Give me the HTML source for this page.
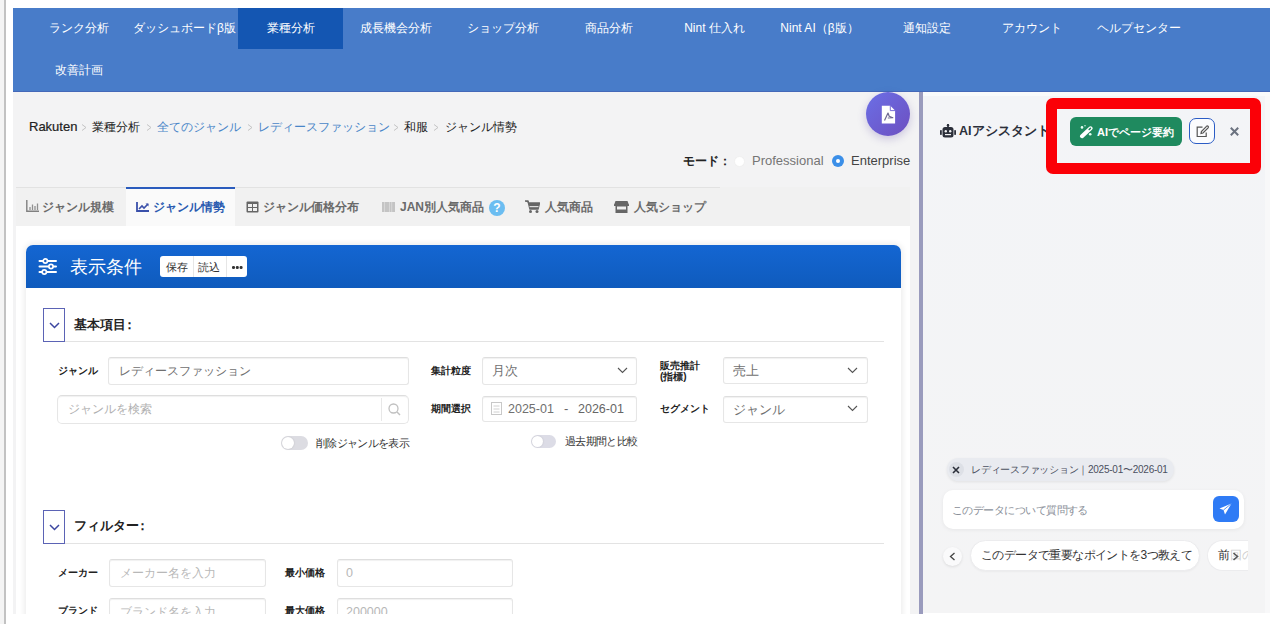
<!DOCTYPE html>
<html><head><meta charset="utf-8">
<style>
*{box-sizing:border-box;margin:0;padding:0}
html,body{width:1280px;height:624px;overflow:hidden;background:#fff;font-family:"Liberation Sans",sans-serif;color:#222}
.abs{position:absolute}
#edge{left:4px;top:0;width:2px;height:624px;background:#c2c2c2}
body::before{content:"";position:absolute;left:0;top:0;width:4px;height:624px;background:#f4f4f4}
#nav{left:13px;top:8px;width:1257px;height:84px;background:#487cc9;border-bottom:1px solid #4468b8}
.ni{position:absolute;height:42px;line-height:40px;font-size:12px;color:#fff;text-align:center;white-space:nowrap}
#main{left:13px;top:92px;width:906px;height:522px;background:#f3f3f4;overflow:hidden}
#div{left:919px;top:92px;width:4px;height:522px;background:#9a9bbd}
#right{left:923px;top:92px;width:347px;height:521px;background:linear-gradient(180deg,#f3f4f7,#f4f4f5);overflow:hidden}
.crumb{position:absolute;top:119px;font-size:12px;line-height:16px;white-space:nowrap}
.sep{color:#c0c0c0;font-size:10px}
.tab{position:absolute;top:187px;height:39px;line-height:40px;font-size:12px;font-weight:bold;color:#6a6a6a;white-space:nowrap}
.lbl{position:absolute;font-size:10px;font-weight:bold;color:#222;white-space:nowrap}
.inp{position:absolute;background:#fff;border:1px solid #e6e6e6;border-top-color:#dedede;box-shadow:inset 0 1px 1px rgba(0,0,0,.06);border-radius:3px;font-size:13px;color:#707070;white-space:nowrap}
.chev{position:absolute;width:8px;height:8px;border-right:1.5px solid #555;border-bottom:1.5px solid #555;transform:rotate(45deg)}
</style></head><body>
<div id="edge" class="abs"></div>
<div id="nav" class="abs">
  <div class="abs" style="left:225px;top:0;width:105px;height:41px;background:#1456b2"></div>
  <div class="ni" style="left:13px;top:0;width:105px">ランク分析</div>
  <div class="ni" style="left:119px;top:0;width:105px">ダッシュボードβ版</div>
  <div class="ni" style="left:225px;top:0;width:105px">業種分析</div>
  <div class="ni" style="left:330px;top:0;width:105px">成長機会分析</div>
  <div class="ni" style="left:437px;top:0;width:105px">ショップ分析</div>
  <div class="ni" style="left:543px;top:0;width:105px">商品分析</div>
  <div class="ni" style="left:649px;top:0;width:105px">Nint 仕入れ</div>
  <div class="ni" style="left:754px;top:0;width:105px">Nint AI（β版）</div>
  <div class="ni" style="left:861px;top:0;width:105px">通知設定</div>
  <div class="ni" style="left:966px;top:0;width:105px">アカウント</div>
  <div class="ni" style="left:1073px;top:0;width:105px">ヘルプセンター</div>
  <div class="ni" style="left:13px;top:42px;width:105px">改善計画</div>
</div>
<div id="main" class="abs"></div>
<!-- breadcrumb -->
<div class="crumb" style="left:29px;font-size:13px;-webkit-text-stroke:.2px #222">Rakuten</div>
<svg class="abs" style="left:81px;top:123px" width="6" height="9"><path d="M1 1.5L5 4.5 1 7.5" fill="none" stroke="#c4c4c4" stroke-width="1"/></svg>
<div class="crumb" style="left:92px">業種分析</div>
<svg class="abs" style="left:146px;top:123px" width="6" height="9"><path d="M1 1.5L5 4.5 1 7.5" fill="none" stroke="#c4c4c4" stroke-width="1"/></svg>
<div class="crumb" style="left:157px;color:#4a86c8">全てのジャンル</div>
<svg class="abs" style="left:247px;top:123px" width="6" height="9"><path d="M1 1.5L5 4.5 1 7.5" fill="none" stroke="#c4c4c4" stroke-width="1"/></svg>
<div class="crumb" style="left:258px;color:#4a86c8">レディースファッション</div>
<svg class="abs" style="left:393px;top:123px" width="6" height="9"><path d="M1 1.5L5 4.5 1 7.5" fill="none" stroke="#c4c4c4" stroke-width="1"/></svg>
<div class="crumb" style="left:404px">和服</div>
<svg class="abs" style="left:433px;top:123px" width="6" height="9"><path d="M1 1.5L5 4.5 1 7.5" fill="none" stroke="#c4c4c4" stroke-width="1"/></svg>
<div class="crumb" style="left:445px">ジャンル情勢</div>
<!-- pdf -->
<div class="abs" style="left:866px;top:92px;width:44px;height:44px;border-radius:50%;background:linear-gradient(135deg,#6b6fe6,#6d4fc0);box-shadow:0 3px 8px rgba(80,60,160,.25)"></div>
<svg class="abs" style="left:881px;top:105px" width="16" height="20" viewBox="0 0 16 20"><path d="M.8 .8h8.5l4.8 4.8v12.8H.8z" fill="#fff"/><path d="M9.3 .8v4.8h4.8" fill="none" stroke="#6a5fd0" stroke-width=".9"/><path d="M3.5 15.5L7 8l1.2 3.2 3.6 1.5-5 .3" fill="none" stroke="#6e6890" stroke-width="1.2" stroke-linejoin="round"/></svg>
<!-- mode -->
<div class="abs" style="left:683px;top:153px;font-size:12px;font-weight:bold;line-height:16px;white-space:nowrap">モード：</div>
<div class="abs" style="left:734px;top:156px;width:11px;height:11px;border-radius:50%;background:#fff;border:1px solid #f0f0f0"></div>
<div class="abs" style="left:752px;top:153px;font-size:13px;color:#757575;line-height:16px;white-space:nowrap">Professional</div>
<div class="abs" style="left:832px;top:155px;width:12px;height:12px;border-radius:50%;background:#3b8fe8"><div class="abs" style="left:4px;top:4px;width:4px;height:4px;border-radius:50%;background:#fff"></div></div>
<div class="abs" style="left:851px;top:153px;font-size:13px;color:#444;line-height:16px;white-space:nowrap">Enterprise</div>
<!-- tabs -->
<div class="abs" style="left:16px;top:187px;width:894px;height:39px;background:#f1f1f1"></div><div class="abs" style="left:16px;top:187px;width:704px;height:1px;background:#e2e2e2"></div>
<div class="abs" style="left:126px;top:187px;width:109px;height:40px;background:#fafafa;border-top:2.5px solid #2a5bbd"></div>
<svg class="abs" style="left:26px;top:200px" width="13" height="12" viewBox="0 0 13 12"><path d="M.8 0v11.2H13" fill="none" stroke="#808080" stroke-width="1.4"/><path d="M4 10V7M6.5 10V4.5M9 10V6M11.5 10V3.5" stroke="#909090" stroke-width="1.3"/></svg>
<svg class="abs" style="left:136px;top:202px" width="13" height="10" viewBox="0 0 13 10"><path d="M1 0v9h12" fill="none" stroke="#3a50aa" stroke-width="1.8"/><path d="M3 7l3-3 2 2 4-4" fill="none" stroke="#3a50aa" stroke-width="1.6"/><path d="M9.5 1.5h3v3z" fill="#3a50aa"/></svg>
<svg class="abs" style="left:246px;top:201px" width="13" height="12" viewBox="0 0 13 12"><rect x=".5" y=".5" width="12" height="11" rx="1" fill="#666"/><rect x="2" y="3" width="4" height="3" fill="#f0f0f0"/><rect x="7" y="3" width="4" height="3" fill="#f0f0f0"/><rect x="2" y="7" width="4" height="3" fill="#f0f0f0"/><rect x="7" y="7" width="4" height="3" fill="#f0f0f0"/></svg>
<svg class="abs" style="left:382px;top:202px" width="13" height="10" viewBox="0 0 13 10"><rect x="0" y="0" width="13" height="10" fill="#c4c4c4"/><rect x="2.2" y="0" width=".6" height="10" fill="#e4e4e4"/><rect x="7" y="0" width=".6" height="10" fill="#e4e4e4"/><rect x="9.5" y="0" width=".6" height="10" fill="#e4e4e4"/></svg>
<svg class="abs" style="left:525px;top:200px" width="15" height="13" viewBox="0 0 15 13"><path d="M0 1h3l2 8h8l1.5-6H4" fill="#666" stroke="#666" stroke-width="1.5" stroke-linejoin="round"/><rect x="4.5" y="6" width="9" height="1.2" fill="#ddd"/><circle cx="5.5" cy="11.5" r="1.5" fill="#666"/><circle cx="12" cy="11.5" r="1.5" fill="#666"/></svg>
<svg class="abs" style="left:614px;top:201px" width="15" height="12" viewBox="0 0 15 12"><path d="M1.5 0h12l1.5 4H0z" fill="#666"/><rect x="0" y="3.5" width="15" height="1.5" fill="#666"/><rect x="1.5" y="5" width="12" height="7" fill="#666"/><rect x="3" y="5.5" width="9" height="3" fill="#f0f0f0"/></svg>
<div class="tab" style="left:42px">ジャンル規模</div>
<div class="tab" style="left:153px;color:#2a5bb0">ジャンル情勢</div>
<div class="tab" style="left:263px">ジャンル価格分布</div>
<div class="tab" style="left:400px">JAN別人気商品</div>
<div class="abs" style="left:489px;top:200px;width:16px;height:16px;border-radius:50%;background:#6bbdf1;color:#fff;font-size:12px;font-weight:bold;text-align:center;line-height:16px">?</div>
<div class="tab" style="left:545px">人気商品</div>
<div class="tab" style="left:634px">人気ショップ</div>
<!-- content -->
<div class="abs" style="left:16px;top:226px;width:894px;height:388px;background:#fff"></div>
<!-- panel -->
<div class="abs" style="left:26px;top:245px;width:875px;height:380px;background:#fff;border-radius:7px 7px 0 0;box-shadow:0 0 6px 1px rgba(0,0,0,.09)"></div>
<div class="abs" style="left:26px;top:245px;width:875px;height:43px;background:linear-gradient(180deg,#1466d2,#0f5bbd);border-radius:7px 7px 0 0"></div>
<svg class="abs" style="left:38px;top:257px" width="20" height="20" viewBox="0 0 20 20"><g stroke="#fff" stroke-width="2" stroke-linecap="round" fill="none"><path d="M1.5 4h16.5M1.5 9.5h16.5M1.5 15h16.5"/></g><g fill="#1a5cc0" stroke="#fff" stroke-width="1.7"><circle cx="7.3" cy="4" r="2.1"/><circle cx="13" cy="9.5" r="2.1"/><circle cx="6.3" cy="15" r="2.1"/></g></svg>
<div class="abs" style="left:70px;top:256px;font-size:17.5px;line-height:22px;color:#fff;white-space:nowrap">表示条件</div>
<div class="abs" style="left:160px;top:256px;width:87px;height:21px;background:#fff;border-radius:3px"></div>
<div class="abs" style="left:193px;top:256px;width:1px;height:21px;background:#e6e6e6"></div>
<div class="abs" style="left:226px;top:256px;width:1px;height:21px;background:#e6e6e6"></div>
<div class="abs" style="left:166px;top:261px;font-size:10.5px;line-height:12px;color:#333;white-space:nowrap">保存</div>
<div class="abs" style="left:198px;top:261px;font-size:10.5px;line-height:12px;color:#333;white-space:nowrap">読込</div>
<div class="abs" style="left:232px;top:266px;width:2.6px;height:2.6px;border-radius:50%;background:#333;box-shadow:3.8px 0 #333,7.6px 0 #333"></div>
<!-- section 1 -->
<div class="abs" style="left:43px;top:308px;width:22px;height:34px;border:1px solid #5b63b5"></div>
<svg class="abs" style="left:49px;top:322px" width="11" height="7"><path d="M1 1l4.5 4.5L10 1" fill="none" stroke="#3c46a0" stroke-width="1.5"/></svg>
<div class="abs" style="left:65px;top:341px;width:819px;height:1px;background:#e3e3e3"></div>
<div class="abs" style="left:74px;top:317px;font-size:12.5px;font-weight:bold;line-height:16px;white-space:nowrap">基本項目<span style="margin-left:-3px">：</span></div>
<div class="lbl" style="left:58px;top:364px;line-height:14px">ジャンル</div>
<div class="inp" style="left:108px;top:357px;width:301px;height:28px;padding:0 0 0 10px;line-height:26px;font-size:12px">レディースファッション</div>
<div class="inp" style="left:57px;top:395px;width:352px;height:29px;padding:0 0 0 10px;line-height:27px;color:#b0b0b0;font-size:12px;border-radius:5px">ジャンルを検索</div>
<div class="abs" style="left:381px;top:398px;width:1px;height:23px;background:#e8e8e8"></div>
<svg class="abs" style="left:388px;top:403px" width="13" height="13"><circle cx="5.5" cy="5.5" r="4.5" fill="none" stroke="#c0c0c0" stroke-width="1.3"/><path d="M9 9l3 3" stroke="#c0c0c0" stroke-width="1.4"/></svg>
<div class="abs" style="left:281px;top:436px;width:27px;height:14px;border-radius:7px;background:#dcdce2"></div>
<div class="abs" style="left:282px;top:437px;width:12px;height:12px;border-radius:50%;background:#fff;box-shadow:0 0 2px rgba(0,0,0,.15)"></div>
<div class="abs" style="left:316px;top:437px;font-size:10.5px;line-height:13px;color:#333;letter-spacing:-.65px;white-space:nowrap">削除ジャンルを表示</div>
<div class="lbl" style="left:431px;top:364px;line-height:14px">集計粒度</div>
<div class="inp" style="left:482px;top:357px;width:155px;height:28px;padding:0 0 0 9px;line-height:26px">月次</div>
<svg class="abs" style="left:617px;top:367px" width="11" height="7"><path d="M1 1l4.5 4.5L10 1" fill="none" stroke="#555" stroke-width="1.1"/></svg>
<div class="lbl" style="left:431px;top:402px;line-height:14px">期間選択</div>
<div class="inp" style="left:482px;top:396px;width:155px;height:26px;padding:0 0 0 25px;line-height:24px;font-size:12.5px">2025-01</div>
<div class="abs" style="left:564px;top:401px;font-size:13px;line-height:16px;color:#666">-</div>
<div class="abs" style="left:578px;top:401px;font-size:12.5px;line-height:16px;color:#666">2026-01</div>
<svg class="abs" style="left:491px;top:402px" width="11" height="13"><rect x=".5" y=".5" width="10" height="12" fill="none" stroke="#c8c8c8"/><path d="M2.5 4h6M2.5 7h6M2.5 10h6" stroke="#d0d0d0"/></svg>
<div class="abs" style="left:531px;top:435px;width:25px;height:13px;border-radius:7px;background:#dcdce6"></div>
<div class="abs" style="left:532px;top:436px;width:11px;height:11px;border-radius:50%;background:#fff;box-shadow:0 0 2px rgba(0,0,0,.15)"></div>
<div class="abs" style="left:565px;top:435px;font-size:10.5px;line-height:13px;color:#333;letter-spacing:-.65px;white-space:nowrap">過去期間と比較</div>
<div class="lbl" style="left:660px;top:360px;line-height:11px">販売推計<br>(指標)</div>
<div class="inp" style="left:723px;top:357px;width:145px;height:27px;padding:0 0 0 9px;line-height:25px">売上</div>
<svg class="abs" style="left:847px;top:367px" width="11" height="7"><path d="M1 1l4.5 4.5L10 1" fill="none" stroke="#555" stroke-width="1.1"/></svg>
<div class="lbl" style="left:660px;top:402px;line-height:14px">セグメント</div>
<div class="inp" style="left:723px;top:396px;width:145px;height:27px;padding:0 0 0 9px;line-height:25px">ジャンル</div>
<svg class="abs" style="left:847px;top:405px" width="11" height="7"><path d="M1 1l4.5 4.5L10 1" fill="none" stroke="#555" stroke-width="1.1"/></svg>
<!-- section 2 -->
<div class="abs" style="left:43px;top:510px;width:22px;height:34px;border:1px solid #5b63b5"></div>
<svg class="abs" style="left:49px;top:524px" width="11" height="7"><path d="M1 1l4.5 4.5L10 1" fill="none" stroke="#3c46a0" stroke-width="1.5"/></svg>
<div class="abs" style="left:65px;top:543px;width:819px;height:1px;background:#e3e3e3"></div>
<div class="abs" style="left:74px;top:518px;font-size:12.5px;font-weight:bold;line-height:16px;white-space:nowrap">フィルター<span style="margin-left:-3px">：</span></div>
<div class="lbl" style="left:58px;top:566px;line-height:14px">メーカー</div>
<div class="inp" style="left:109px;top:559px;width:157px;height:28px;padding:0 0 0 10px;line-height:26px;color:#b8b8b8;font-size:12px">メーカー名を入力</div>
<div class="lbl" style="left:58px;top:604px;line-height:14px">ブランド</div>
<div class="inp" style="left:109px;top:598px;width:157px;height:28px;padding:0 0 0 10px;line-height:26px;color:#b8b8b8;font-size:12px">ブランド名を入力</div>
<div class="lbl" style="left:285px;top:566px;line-height:14px">最小価格</div>
<div class="inp" style="left:337px;top:559px;width:176px;height:28px;padding:0 0 0 8px;line-height:26px;color:#b8b8b8;font-size:12.5px">0</div>
<div class="lbl" style="left:285px;top:604px;line-height:14px">最大価格</div>
<div class="inp" style="left:337px;top:598px;width:176px;height:28px;padding:0 0 0 8px;line-height:26px;color:#b8b8b8;font-size:12.5px">200000</div>
<div class="abs" style="left:13px;top:614px;width:906px;height:10px;background:#fff"></div>
<div id="div" class="abs"></div>
<div id="right" class="abs"></div>
<div class="abs" style="left:923px;top:92px;width:347px;height:4px;background:#f9fafb"></div>
<!-- right panel -->
<svg class="abs" style="left:940px;top:124px" width="16" height="14" viewBox="0 0 16 14"><rect x="7.2" y="0" width="1.6" height="3" fill="#2b2f3a"/><circle cx="8" cy="1.2" r="1.2" fill="#2b2f3a"/><rect x="2.5" y="3" width="11" height="10.5" rx="2.5" fill="#2b2f3a"/><rect x="0" y="6" width="1.8" height="5" rx=".8" fill="#2b2f3a"/><rect x="14.2" y="6" width="1.8" height="5" rx=".8" fill="#2b2f3a"/><circle cx="5.8" cy="7.3" r="1.2" fill="#f3f4f6"/><circle cx="10.2" cy="7.3" r="1.2" fill="#f3f4f6"/><rect x="5" y="10" width="6" height="1.2" fill="#f3f4f6"/></svg>
<div class="abs" style="left:959px;top:123px;font-size:12.5px;font-weight:bold;line-height:17px;color:#2b2f3a;white-space:nowrap">AIアシスタント</div>
<div class="abs" style="left:1046px;top:98px;width:215px;height:76px;border:11px solid #fb0007;border-radius:7px"></div>
<div class="abs" style="left:1070px;top:117px;width:112px;height:29px;border-radius:6px;background:#1f8a5f"></div>
<svg class="abs" style="left:1079px;top:124px" width="15" height="15" viewBox="0 0 15 15"><path d="M3 12.2L11.6 4.3" stroke="#fff" stroke-width="4" stroke-linecap="round"/><path d="M10.2 5.5l1.2-1.1" stroke="#1f8a5f" stroke-width="1.6" stroke-linecap="round"/><circle cx="3" cy="3.4" r="1.3" fill="#e8fff4"/><circle cx="11.2" cy="10.2" r="1.3" fill="#e8fff4"/><circle cx="6" cy="1.8" r=".7" fill="#e8fff4"/></svg>
<div class="abs" style="left:1097px;top:125px;font-size:11px;font-weight:bold;line-height:14px;color:#fff;white-space:nowrap">AIでページ要約</div>
<div class="abs" style="left:1189px;top:118px;width:26px;height:26px;border:1.8px solid #2b5cc5;border-radius:7px;background:#fbfcfe"></div>
<svg class="abs" style="left:1196px;top:125px" width="13" height="13" viewBox="0 0 13 13"><path d="M6.5 2.2H1.2v9.3h9V7.5" fill="none" stroke="#555" stroke-width="1.2"/><path d="M5 8.5l.4-2L10.5 1.3a1 1 0 0 1 1.6 1.5L7 8z" fill="none" stroke="#555" stroke-width="1.2"/></svg>
<svg class="abs" style="left:1229px;top:126px" width="11" height="11"><path d="M1.8 1.8l7.4 7.4M9.2 1.8l-7.4 7.4" stroke="#6b7280" stroke-width="2"/></svg>
<!-- context chip -->
<div class="abs" style="left:947px;top:458px;width:227px;height:23px;border-radius:12px;background:#e9ebf0;box-shadow:0 1px 3px rgba(0,0,0,.08)"></div>
<div class="abs" style="left:949px;top:462px;width:15px;height:15px;border-radius:50%;background:#dde0e6"></div>
<svg class="abs" style="left:952px;top:466px" width="8" height="8"><path d="M1 1l6 6M7 1l-6 6" stroke="#2b2f3a" stroke-width="1.6"/></svg>
<div class="abs" style="left:971px;top:463px;font-size:10px;letter-spacing:-.25px;line-height:13px;color:#4b5060;white-space:nowrap">レディースファッション｜2025-01〜2026-01</div>
<!-- input -->
<div class="abs" style="left:943px;top:490px;width:301px;height:39px;border-radius:10px;background:#fff;box-shadow:0 1px 4px rgba(0,0,0,.06)"></div>
<div class="abs" style="left:952px;top:503px;font-size:11px;letter-spacing:-.55px;line-height:14px;color:#8a8f99;white-space:nowrap">このデータについて質問する</div>
<div class="abs" style="left:1213px;top:496px;width:26px;height:26px;border-radius:6px;background:#2f7bf5"></div>
<svg class="abs" style="left:1219px;top:503px" width="13" height="12" viewBox="0 0 13 12"><path d="M12.5 .5L.5 5.5l4 1.5 1.5 4.5z" fill="#fff"/><path d="M4.5 7l8-6.5" stroke="#2f7bf5" stroke-width=".8"/></svg>
<!-- suggestions -->
<div class="abs" style="left:943px;top:547px;width:19px;height:19px;border-radius:50%;background:#fafafb;box-shadow:0 1px 3px rgba(0,0,0,.1)"></div>
<svg class="abs" style="left:949px;top:552px" width="7" height="9"><path d="M5.5 1L1.5 4.5 5.5 8" fill="none" stroke="#444" stroke-width="1.3"/></svg>
<div class="abs" style="left:970px;top:540px;width:230px;height:31px;border-radius:16px;background:#fff;border:1px solid #ececee;box-shadow:0 1px 2px rgba(0,0,0,.04)"></div>
<div class="abs" style="left:981px;top:548px;font-size:12px;letter-spacing:-.6px;line-height:15px;color:#333;white-space:nowrap">このデータで重要なポイントを3つ教えて</div>
<div class="abs" style="left:1207px;top:540px;width:60px;height:31px;border-radius:16px 0 0 16px;background:#fff;border:1px solid #ececee;border-right:0"></div>
<div class="abs" style="left:1218px;top:548px;font-size:12px;line-height:15px;color:#333;white-space:nowrap">前回の</div>
<div class="abs" style="left:1229px;top:541px;width:19px;height:29px;background:rgba(255,255,255,.75)"></div>
<svg class="abs" style="left:1232px;top:552px" width="7" height="9"><path d="M1.5 1L5.5 4.5 1.5 8" fill="none" stroke="#555" stroke-width="1.6"/></svg>
<div class="abs" style="left:1248px;top:530px;width:17px;height:50px;background:#f4f4f5"></div>
<div class="abs" style="left:1265px;top:96px;width:5px;height:517px;background:#f8f8f9"></div>
</body></html>
